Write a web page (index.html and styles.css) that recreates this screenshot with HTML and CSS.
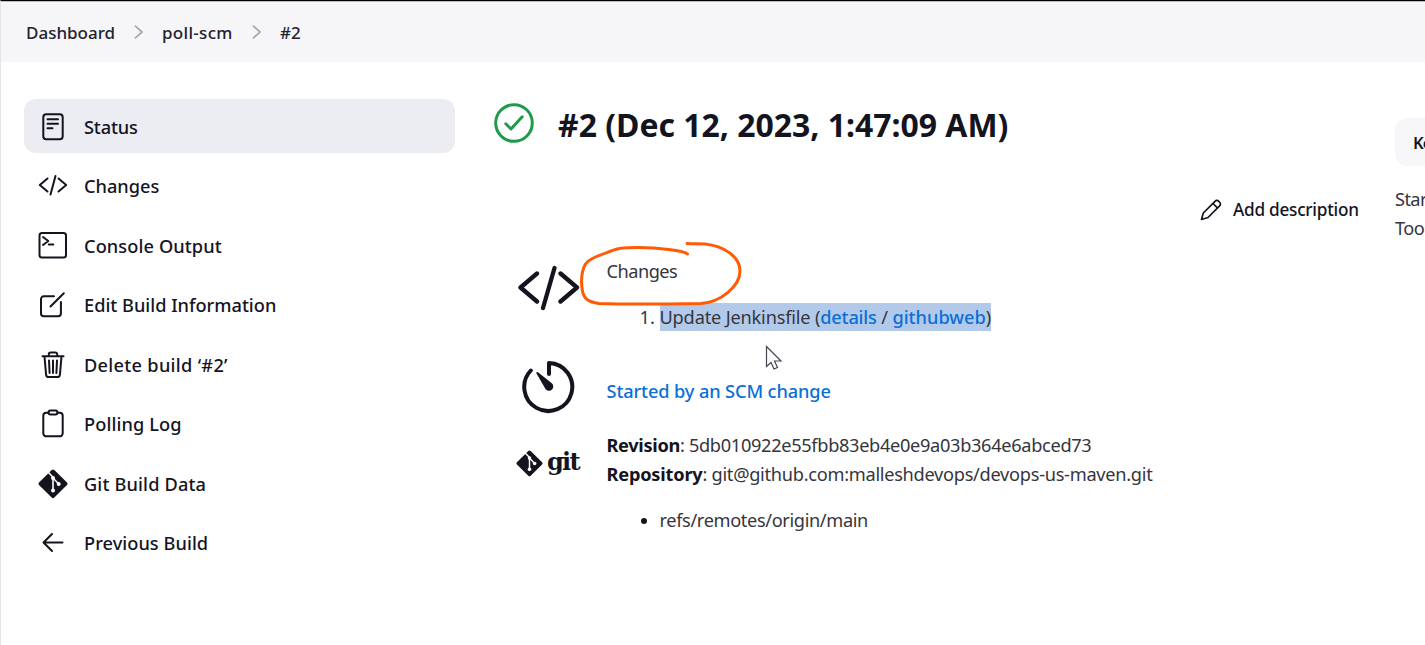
FILE: index.html
```html
<!DOCTYPE html>
<html lang="en">
<head>
<meta charset="utf-8">
<title>poll-scm #2</title>
<link rel="stylesheet" href="styles.css">
</head>
<body>
<div class="page">
  <nav class="crumbs">
    <span class="crumb crumb-home">Dashboard</span>
    <svg class="chev" viewBox="0 0 10 14"><path d="M1.500 1.200 8 7l-6.500 5.800"/></svg>
    <span class="crumb crumb-job">poll-scm</span>
    <svg class="chev" viewBox="0 0 10 14"><path d="M1.500 1.200 8 7l-6.500 5.800"/></svg>
    <span class="crumb">#2</span>
  </nav>
  <div class="body">
    <aside class="side">
      <a class="task active"><svg class="ico" viewBox="0 0 30 30"><rect x="5.300" y="2.300" width="19.400" height="25" rx="3"/><path d="M9.500 7.300h10.500M9.500 11.800h10.500M9.500 16.300h5"/></svg><span class="t1">Status</span></a>
      <a class="task"><svg class="ico" viewBox="0 0 30 30"><path d="M9.500 7.500 1.800 14l7.700 6.500M20.500 7.500l7.700 6.500-7.700 6.500M17.500 5l-5 18.500"/></svg><span>Changes</span></a>
      <a class="task"><svg class="ico" viewBox="0 0 30 30"><rect x="1.500" y="2" width="26.500" height="24.500" rx="2.500"/><path d="M5 6l5.300 4L5 14M10.800 13.500h4.500"/></svg><span class="t3">Console Output</span></a>
      <a class="task"><svg class="ico" viewBox="0 0 30 30"><path d="M16 6.300H5.800a2.800 2.800 0 0 0-2.800 2.800v14.300a2.800 2.800 0 0 0 2.800 2.800h14.300a2.800 2.800 0 0 0 2.800-2.800V12M12.500 16.500 25.800 3.200"/></svg><span>Edit Build Information</span></a>
      <a class="task"><svg class="ico" viewBox="0 0 30 30"><path d="M4.500 6.300h21M6.500 6.500l1.600 18.300a2.500 2.500 0 0 0 2.500 2.200h8.800a2.500 2.500 0 0 0 2.500-2.200l1.600-18.300M10.800 6V4.200a1.800 1.800 0 0 1 1.800-1.800h4.800a1.800 1.800 0 0 1 1.800 1.800V6M11 10.500l.6 12.500M15 10.500V23M19 10.500l-.6 12.500"/></svg><span class="t5">Delete build ‘#2’</span></a>
      <a class="task"><svg class="ico" viewBox="0 0 30 30"><path d="M10.500 3.800H8.300a3 3 0 0 0-3 3v17.500a3 3 0 0 0 3 3h13.400a3 3 0 0 0 3-3V6.800a3 3 0 0 0-3-3h-2.200"/><rect x="10.500" y="1.600" width="9" height="4" rx="2"/></svg><span class="t3">Polling Log</span></a>
      <a class="task"><svg class="ico" viewBox="0 0 30 30"><path class="solid" d="M13.700 1a2 2 0 0 1 2.600 0L29 13.500a2 2 0 0 1 0 2.500L16.300 28.600a2 2 0 0 1-2.600 0L1 16a2 2 0 0 1 0-2.500Z"/><path class="cut" d="M10.500 3.500 15 8.200v13M15.500 9.500l5 5.200"/><circle class="dot" cx="15" cy="9" r="2"/><circle class="dot" cx="15" cy="21.500" r="2"/><circle class="dot" cx="20.700" cy="15" r="2"/></svg><span class="t7">Git Build Data</span></a>
      <a class="task"><svg class="ico" viewBox="0 0 30 30"><path d="M14 6 5.500 14.500 14 23M5.500 14.500h19"/></svg><span class="t8">Previous Build</span></a>
    </aside>
    <main class="main">
      <header class="head">
        <svg class="ok" viewBox="0 0 40 40"><circle cx="20" cy="20" r="18.300"/><path d="M11.800 20.800 17 26l11.200-12.200"/></svg>
        <h1>#2 (Dec 12, 2023, 1:47:09 AM)</h1>
      </header>
      <div class="desc">
        <svg class="pen" viewBox="0 0 22 22"><path d="M1.500 20.500 3.300 14 15 2.300a2.600 2.600 0 0 1 3.800 0l.8.800a2.600 2.600 0 0 1 0 3.800L8 18.500ZM13 4.500l4.600 4.600"/></svg>
        <span>Add description</span>
      </div>
      <section class="row row-changes">
        <svg class="big code" viewBox="0 0 64 48"><path d="M21 9.500 4.500 23.500l16.500 14M44.500 9.500l16.500 14-16.500 14M38.500 4 27 44"/></svg>
        <div class="cell">
          <div class="label"><span class="changes">Changes</span>
            <svg class="scribble" viewBox="0 0 164 66"><path d="M108.500 12C105 8.500 78 5.500 60 5.500C40 5.500 38 7 32 9C16 15 10 17 6.500 22C2 30 2 38 3 46C4 56 8 60 20 61.500C50 62.500 90 62 122 61.500C142 60 161 44 161 29C161 14 144 4 126 2C120 1.500 114 2 108 1.500"/></svg>
          </div>
          <ol class="list"><li><span class="sel">Update Jenkinsfile (<a>details</a> / <a class="hub">githubweb</a>)</span></li></ol>
        </div>
      </section>
      <section class="row row-cause">
        <svg class="big timer" viewBox="0 0 56 56"><path d="M9.800 11.500A24 24 0 1 0 28 4v11"/><path class="needle" d="M15.500 14.500c-.8-.9.500-2 1.500-1.300L30.500 24a4.300 4.300 0 1 1-6 6Z"/></svg>
        <a class="cause">Started by an SCM change</a>
      </section>
      <section class="row row-git">
        <div class="gitlogo"><svg class="gitico" viewBox="0 0 30 30"><path class="solid" d="M13.700 1a2 2 0 0 1 2.600 0L29 13.500a2 2 0 0 1 0 2.500L16.300 28.600a2 2 0 0 1-2.600 0L1 16a2 2 0 0 1 0-2.500Z"/><path class="cut" d="M10.500 3.500 15 8.200v13M15.500 9.500l5 5.200"/><circle class="dot" cx="15" cy="9" r="2"/><circle class="dot" cx="15" cy="21.500" r="2"/><circle class="dot" cx="20.700" cy="15" r="2"/></svg><span class="gitword">git</span></div>
        <div class="cell">
          <div class="kv"><b>Revision</b>: 5db010922e55fbb83eb4e0e9a03b364e6abced73</div>
          <div class="kv url"><b class="repo">Repository</b>: git@github.com:malleshdevops/devops-us-maven.git</div>
          <ul class="list refs"><li>refs/remotes/origin/main</li></ul>
        </div>
      </section>
    </main>
    <div class="right">
      <div class="keep">Ke</div>
      <div class="times">Star<br>Too</div>
    </div>
  </div>
  <svg class="cursor" viewBox="0 0 18 26"><path d="M1.500 1.500v20l4.500-4 3 6.500 3.500-1.500-3-6.500h6.500Z"/></svg>
</div>
</body>
</html>
```
FILE: styles.css
```css
* { box-sizing: border-box; }
body {
  margin: 0;
  background: #fff;
  color: #35353d;
  font: 18.200px/28.500px "Noto Sans", "Open Sans", sans-serif;
}
.page {
  position: relative;
  width: 1425px;
  height: 645px;
  overflow: hidden;
  border-top: 1px solid #000;
  border-left: 1px solid #e4e4e6;
}
svg { fill: none; stroke: #14141f; stroke-width: 2; stroke-linecap: round; stroke-linejoin: round; flex: none; }
.crumbs {
  display: flex;
  align-items: center;
  height: 61px;
  padding: 2px 0 0 25px;
  background: #f6f6f9;
  border-top: 1px solid #c0c0c2;
  color: #22222c;
  font-size: 17px;
  font-weight: 500;
  white-space: nowrap;
}
.chev { width: 10px; height: 16px; margin: -2px 18.500px 0 18.500px; stroke: #a9a9b0; stroke-width: 1.800; }
.crumb-home { width: 89px; }
.crumb-job { width: 71px; letter-spacing: .3px; }
.body { display: flex; padding: 37px 0 0 23px; }
.side { display: flex; flex: none; flex-direction: column; gap: 6px; width: 431px; }
.task {
  display: flex;
  align-items: center;
  height: 53.500px;
  padding-left: 14px;
  border-radius: 12px;
  color: #14141f;
  font-weight: 500;
  white-space: nowrap;
}
.task span { padding-top: 2px; }
.t1 { letter-spacing: -.15px; }
.t3 { letter-spacing: .1px; }
.t5 { letter-spacing: .3px; }
.t7 { letter-spacing: .15px; }
.t8 { letter-spacing: .05px; }
.active { background: #ececf3; }
.ico { width: 30px; height: 30px; margin: 2px 16px 0 0; }
.solid { fill: #14141f; stroke: none; }
.cut { stroke: #fff; stroke-width: 1.600; }
.dot { fill: #fff; stroke: none; }
.main { flex: none; width: 940px; padding-left: 39px; }
.head { display: flex; align-items: center; height: 48px; }
.ok { width: 40px; height: 40px; stroke: #1e9a4b; stroke-width: 3; }
h1 { margin: 3px 0 0 24px; color: #14141f; font-size: 31.950px; line-height: 40px; font-weight: 700; white-space: nowrap; }
.desc { display: flex; align-items: center; height: 29px; margin: 48px 0 0 706px; color: #14141f; font-weight: 500; font-size: 17.200px; letter-spacing: -.25px; white-space: nowrap; }
.desc span { padding-top: 2px; }
.pen { width: 22px; height: 22px; margin-right: 11px; stroke-width: 1.700; }
.row { display: flex; white-space: nowrap; }
.row-changes { margin-top: 33px; padding-left: 22px; }
.code { width: 64px; height: 48px; margin: 7px 26.500px 0 0; stroke-width: 4.300; }
.label { position: relative; letter-spacing: -.5px; }
.scribble { position: absolute; left: -28px; top: -15px; width: 164px; height: 66px; stroke: #ff5a05; stroke-width: 3; }
.list { margin: 17.500px 0 0; padding-left: 53px; }
.sel { display: inline-block; height: 28px; background: #b2c9ea; letter-spacing: -.18px; }
.list a, .cause { color: #0b6fd6; font-weight: 500; }
.list .hub { letter-spacing: 0; }
.row-cause { align-items: center; height: 56px; margin-top: 27px; padding-left: 27px; }
.timer { width: 56px; height: 56px; margin-right: 29.500px; stroke-width: 4; }
.needle { fill: #14141f; stroke: none; }
.cause { padding-top: 10px; letter-spacing: -.12px; }
.row-git { margin-top: 16.500px; padding-left: 22px; }
.gitlogo { display: flex; align-items: center; width: 65px; height: 30px; margin: 17px 25.500px 0 0; }
.gitico { width: 27px; height: 27px; }
.gitword { margin: -3px 0 0 4px; color: #14141f; font: 700 24px/30px "DejaVu Serif", serif; letter-spacing: -1.700px; }
.kv { letter-spacing: -.32px; }
.kv.url { letter-spacing: -.28px; }
.kv b { color: #14141f; }
.repo { letter-spacing: -.2px; }
.refs { letter-spacing: -.36px; }
.refs li::marker { color: #14141f; }
.right { flex: none; width: 100px; padding-top: 19px; white-space: nowrap; }
.keep { height: 48px; padding: 11px 18px; border-radius: 12px; background: #f7f7fa; color: #14141f; font-weight: 600; font-size: 16.500px; letter-spacing: -1px; }
.times { margin-top: 19px; letter-spacing: -.6px; }
.cursor { position: absolute; left: 764px; top: 344px; width: 18px; height: 26px; fill: #fff; stroke: #44444c; stroke-width: 1.200; stroke-linejoin: miter; }
```
